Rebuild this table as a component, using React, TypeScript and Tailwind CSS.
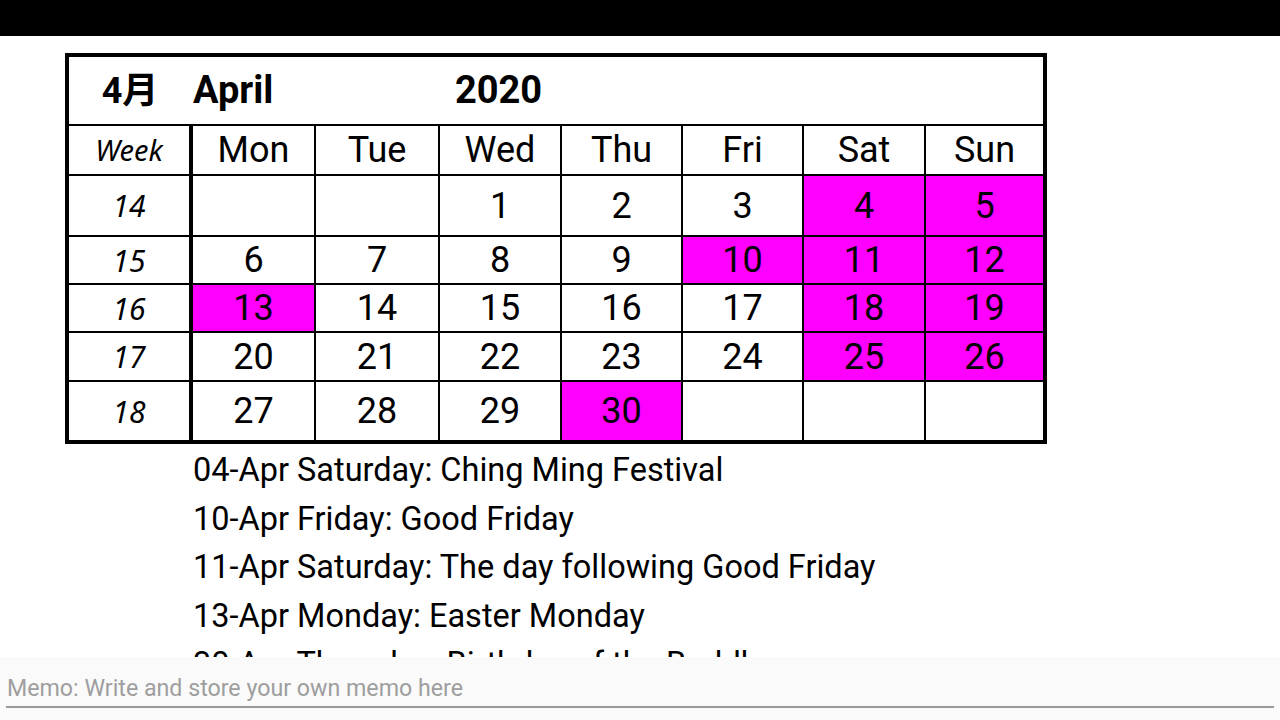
import React from 'react'

// April 2020 calendar with holiday list and a memo bar at the bottom

type Cell = { day?: number; hot?: boolean }

const weeks: { no: number; days: Cell[] }[] = [
  { no: 14, days: [{}, {}, { day: 1 }, { day: 2 }, { day: 3 }, { day: 4, hot: true }, { day: 5, hot: true }] },
  { no: 15, days: [{ day: 6 }, { day: 7 }, { day: 8 }, { day: 9 }, { day: 10, hot: true }, { day: 11, hot: true }, { day: 12, hot: true }] },
  { no: 16, days: [{ day: 13, hot: true }, { day: 14 }, { day: 15 }, { day: 16 }, { day: 17 }, { day: 18, hot: true }, { day: 19, hot: true }] },
  { no: 17, days: [{ day: 20 }, { day: 21 }, { day: 22 }, { day: 23 }, { day: 24 }, { day: 25, hot: true }, { day: 26, hot: true }] },
  { no: 18, days: [{ day: 27 }, { day: 28 }, { day: 29 }, { day: 30, hot: true }, {}, {}, {}] },
]

const dayNames = ['Mon', 'Tue', 'Wed', 'Thu', 'Fri', 'Sat', 'Sun']

const holidays = [
  '04-Apr Saturday: Ching Ming Festival',
  '10-Apr Friday: Good Friday',
  '11-Apr Saturday: The day following Good Friday',
  '13-Apr Monday: Easter Monday',
  '30-Apr Thursday: Birthday of the Buddha',
]

const cols = 'grid-cols-[122px_121px_122px_120px_119px_119px_120px_117px]'

export default function App() {
  return (
    <div className="h-screen w-[1280px] flex flex-col bg-white font-['Roboto',sans-serif] text-black overflow-hidden">
      {/* Top bar */}
      <div className="h-[36px] bg-black shrink-0" />

      <div className="flex-1 overflow-hidden">
        {/* Calendar table */}
        <div className="mt-[17px] ml-[65px] w-[982px] border-[4px] border-black">
          {/* Title row */}
          <div className={`grid ${cols} gap-x-[2px] h-[69px] border-b-2 border-black items-center font-bold text-[38px]`}>
            <div className="text-center text-[36px] font-['Roboto','Noto_Sans_CJK_JP',sans-serif]">4月</div>
            <div>April</div>
            <div />
            <div className="text-center -ml-[3px]">2020</div>
          </div>

          {/* Body grid */}
          <div className={`grid ${cols} grid-rows-[48px_59px_46px_46px_47px_58px] gap-[2px] bg-black`}>
            <div className="bg-white mr-[2px] flex items-center justify-center italic text-[29px] font-['Noto_Sans',sans-serif]">
              Week
            </div>
            {dayNames.map((d) => (
              <div key={d} className="bg-white flex items-center justify-center text-[36px]">
                {d}
              </div>
            ))}

            {weeks.map((w) => (
              <React.Fragment key={w.no}>
                <div className="bg-white mr-[2px] flex items-center justify-center italic text-[30px] font-['Noto_Sans',sans-serif]">
                  {w.no}
                </div>
                {w.days.map((c, i) => (
                  <div
                    key={i}
                    className={`${c.hot ? 'bg-[#ff00ff]' : 'bg-white'} flex items-center justify-center text-[36px]`}
                  >
                    {c.day ?? ''}
                  </div>
                ))}
              </React.Fragment>
            ))}
          </div>
        </div>

        {/* Holiday list */}
        <ul className="ml-[193px] mt-[2px] text-[32.5px] leading-[48.5px]">
          {holidays.map((h) => (
            <li key={h}>{h}</li>
          ))}
        </ul>
      </div>

      {/* Memo bar */}
      <div className="h-[63px] shrink-0 bg-[#fafafa] px-[6px] pt-[17px]">
        <div className="border-b-2 border-[#9a9a9a] pb-[3px] pl-[1px] text-[23.2px] leading-[29px] text-[#9e9e9e]">
          Memo: Write and store your own memo here
        </div>
      </div>
    </div>
  )
}
